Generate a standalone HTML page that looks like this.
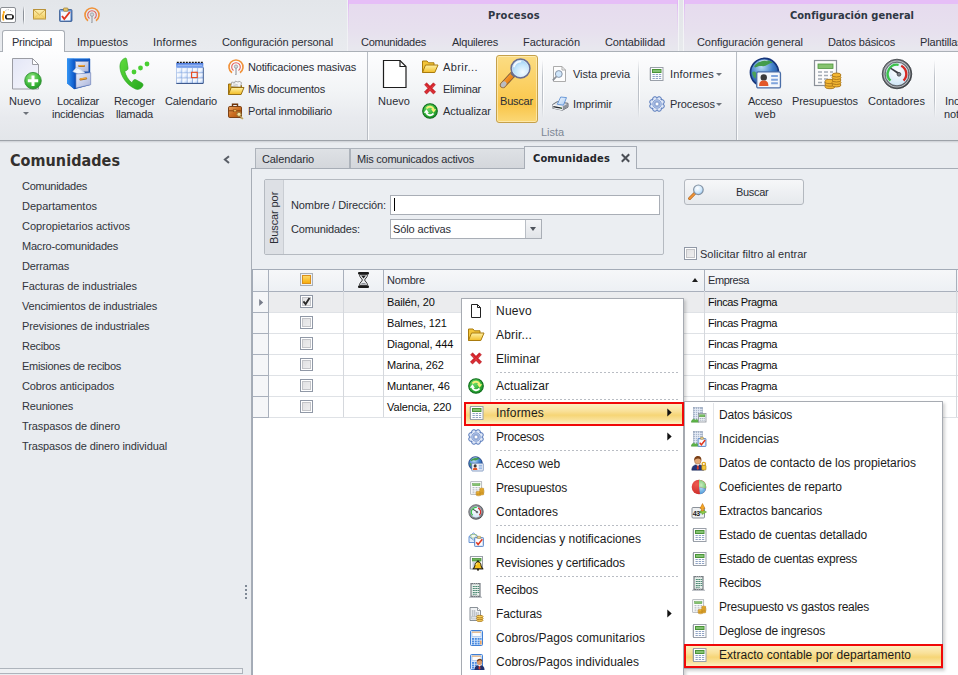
<!DOCTYPE html>
<html lang="es"><head><meta charset="utf-8"><title>Comunidades</title><style>
html,body{margin:0;padding:0;background:#e9ecf0;}
body{width:958px;height:675px;overflow:hidden;position:relative;font-family:"Liberation Sans",sans-serif;color:#2b2e36;}
.b{position:absolute;}
.ic{position:absolute;overflow:visible;}
.t{position:absolute;white-space:nowrap;}
.arr{position:absolute;width:0;height:0;border-left:3px solid transparent;border-right:3px solid transparent;border-top:3px solid #666;}
</style></head><body>
<div class="b" style="left:0px;top:0px;width:958px;height:51px;background:linear-gradient(#e3e6ea,#e9ebef);"></div>
<div class="b" style="left:348px;top:0px;width:330px;height:51px;background:linear-gradient(#e6bef7 0,#e6bef7 4px,#e6dbee 4px,#e7e0ee 30px,#e8e8ee 51px);"></div>
<div class="b" style="left:347px;top:0px;width:1px;height:51px;background:#f1f2f5;"></div>
<div class="b" style="left:348px;top:0px;width:1px;height:51px;background:linear-gradient(#e2b4f6 0,#e2b4f6 4px,#e3c9f0 12px,rgba(230,225,238,0) 34px);"></div>
<div class="b" style="left:677px;top:0px;width:1px;height:51px;background:linear-gradient(#e2b4f6 0,#e2b4f6 4px,#e3c9f0 12px,rgba(230,225,238,0) 34px);"></div>
<div class="b" style="left:684px;top:0px;width:274px;height:51px;background:linear-gradient(#e6bef7 0,#e6bef7 4px,#e6dbee 4px,#e7e0ee 30px,#e8e8ee 51px);"></div>
<div class="b" style="left:684px;top:0px;width:1px;height:51px;background:linear-gradient(#e2b4f6 0,#e2b4f6 4px,#e3c9f0 12px,rgba(230,225,238,0) 34px);"></div>
<div class="b" style="left:678px;top:0px;width:6px;height:51px;background:linear-gradient(#e2e4e8,#e8eaed);border-left:1px solid #f3f4f6;border-right:1px solid #f3f4f6;box-sizing:border-box;"></div>
<div class="b" style="left:0px;top:51px;width:958px;height:89px;background:linear-gradient(#fdfdfe,#f2f4f6 45%,#e8eaee 75%,#e3e6ea);border-top:1px solid #abb0b7;box-sizing:border-box;"></div>
<div class="b" style="left:0px;top:140px;width:958px;height:1px;background:#9da2a9;"></div>
<div class="b" style="left:0px;top:141px;width:958px;height:1px;background:#d3d6db;"></div>
<div class="b" style="left:0px;top:142px;width:958px;height:1px;background:#e1e4e8;"></div>
<div class="b" style="left:2px;top:30px;width:63px;height:22px;background:linear-gradient(#ffffff,#fdfdfe);border:1px solid #a9aeb5;border-bottom:none;border-radius:3px 3px 0 0;box-sizing:border-box;"></div>
<div class="b" style="left:0px;top:7px;width:16px;height:16px;background:#fff;border:1px solid #8b8f95;border-radius:2px;box-sizing:border-box;"><svg width="14" height="14" viewBox="0 0 14 14" style="position:absolute;left:0;top:0"><rect x="4.600" y="6.700" width="7.600" height="4.200" rx="2" fill="none" stroke="#111" stroke-width="1.100"/><path d="M5 7.500v2.600M11.800 7.500v2.600" stroke="#111" stroke-width="1.300"/><path d="M1.700 12.500c-.9-2.500-.9-5.500.3-7.500l1.500.5c-.8 2.300-.6 4.800-.3 7z" fill="#f5a214"/><circle cx="2.900" cy="4.200" r="1.100" fill="#f5a214"/><path d="M4.500 2.600l.9-.6M6.800 1.700h.9M9 2.200l.8.400M10.800 3.400l.5.500" stroke="#8a8d92" stroke-width=".8"/></svg></div>
<div class="b" style="left:23px;top:6px;width:1px;height:19px;background:linear-gradient(rgba(141,146,153,0),#8d9299 30%,#8d9299 70%,rgba(141,146,153,0));"></div>
<div class="b" style="left:24px;top:6px;width:1px;height:19px;background:linear-gradient(rgba(255,255,255,0),#fafbfc 30%,#fafbfc 70%,rgba(255,255,255,0));"></div>
<svg class="ic" style="left:32px;top:8px" width="15" height="13" viewBox="0 0 15 13" ><defs><linearGradient id="env" x1="0" y1="0" x2="0" y2="1"><stop offset="0" stop-color="#fdf0b0"/><stop offset="1" stop-color="#f3cf62"/></linearGradient></defs><rect x="1.500" y="1.500" width="12" height="9.500" fill="url(#env)" stroke="#b8923a"/><path d="M1.500 1.500l6 5.500 6-5.500" fill="none" stroke="#c9a244" stroke-width=".9"/><path d="M1.500 11l4.500-4.500M13.500 11l-4.500-4.500" stroke="#e3c15c" stroke-width=".7"/></svg>
<svg class="ic" style="left:58px;top:7px" width="16" height="16" viewBox="0 0 16 16" ><defs><linearGradient id="clp" x1="0" y1="0" x2="1" y2="1"><stop offset="0" stop-color="#8fb3e6"/><stop offset="1" stop-color="#3d6db8"/></linearGradient></defs><rect x="1.500" y="2.500" width="12.500" height="12" rx="1" fill="url(#clp)" stroke="#34588f" stroke-width=".8"/><rect x="3" y="4.500" width="9.500" height="9" fill="#f7f9fc"/><rect x="5.500" y="1" width="4.500" height="3.200" rx=".8" fill="#e9c66a" stroke="#9a7a2a" stroke-width=".7"/><path d="M4 9l2.300 3 5.500-7" fill="none" stroke="#e0371f" stroke-width="1.900"/></svg>
<svg class="ic" style="left:84px;top:7px" width="16" height="16" viewBox="0 0 16 16" ><path d="M3.990 13.730A7 7 0 1 1 12.010 13.730" fill="none" stroke="#f0923a" stroke-width="1.600"/><path d="M5.530 11.520A4.300 4.300 0 1 1 10.470 11.520" fill="none" stroke="#e2605a" stroke-width="1.100"/><rect x="7.400" y="8.500" width="1.300" height="7.300" fill="#c3c6cb" stroke="#9da1a8" stroke-width=".4"/><circle cx="8" cy="7.600" r="1.700" fill="#d5d7db" stroke="#8b9098" stroke-width=".7"/></svg>
<span class="t" id="t0" style="left:12px;top:35px;font-size:11px;line-height:14px;letter-spacing:-0.243px;">Principal</span>
<span class="t" id="t1" style="left:77px;top:35px;font-size:11px;line-height:14px;letter-spacing:0.028px;">Impuestos</span>
<span class="t" id="t2" style="left:153px;top:35px;font-size:11px;line-height:14px;letter-spacing:0.151px;">Informes</span>
<span class="t" id="t3" style="left:222px;top:35px;font-size:11px;line-height:14px;letter-spacing:-0.097px;">Configuración personal</span>
<span class="t" id="t4" style="left:361px;top:35px;font-size:11px;line-height:14px;letter-spacing:-0.262px;">Comunidades</span>
<span class="t" id="t5" style="left:452px;top:35px;font-size:11px;line-height:14px;letter-spacing:-0.230px;">Alquileres</span>
<span class="t" id="t6" style="left:523px;top:35px;font-size:11px;line-height:14px;letter-spacing:-0.043px;">Facturación</span>
<span class="t" id="t7" style="left:605px;top:35px;font-size:11px;line-height:14px;letter-spacing:-0.097px;">Contabilidad</span>
<span class="t" id="t8" style="left:697px;top:35px;font-size:11px;line-height:14px;letter-spacing:-0.078px;">Configuración general</span>
<span class="t" id="t9" style="left:828px;top:35px;font-size:11px;line-height:14px;letter-spacing:-0.161px;">Datos básicos</span>
<span class="t" id="t10" style="left:920px;top:35px;font-size:11px;line-height:14px;letter-spacing:-0.130px;">Plantillas</span>
<span class="t" id="t11" style="left:488px;top:9px;font-size:11px;line-height:14px;letter-spacing:0.238px;font-weight:bold;font-family:'DejaVu Sans Condensed','Liberation Sans',sans-serif;color:#2f3744;">Procesos</span>
<span class="t" id="t12" style="left:790px;top:9px;font-size:11px;line-height:14px;letter-spacing:0.022px;font-weight:bold;font-family:'DejaVu Sans Condensed','Liberation Sans',sans-serif;color:#2f3744;">Configuración general</span>
<svg class="ic" style="left:11px;top:57px" width="30" height="34" viewBox="0 0 30 34" ><defs><linearGradient id="pg1" x1="0" y1="0" x2="1" y2="1"><stop offset="0" stop-color="#e3e6f6"/><stop offset="1" stop-color="#f7f7fc"/></linearGradient><radialGradient id="gp1" cx=".4" cy=".3" r=".8"><stop offset="0" stop-color="#8fe37f"/><stop offset=".6" stop-color="#3cb83a"/><stop offset="1" stop-color="#1e8a26"/></radialGradient></defs><path d="M1.500 1.500h20l6 6v24.500h-26z" fill="url(#pg1)" stroke="#9b9ca3" stroke-width="1"/><path d="M21.500 1.500v6h6z" fill="#fff" stroke="#9b9ca3" stroke-width="1" stroke-linejoin="round"/><circle cx="22" cy="23.700" r="8.300" fill="url(#gp1)" stroke="#2a8a2c" stroke-width=".8"/><path d="M22 18.500v10.400M16.800 23.700h10.400" stroke="#fff" stroke-width="3"/></svg>
<span class="t" id="t13" style="left:9px;top:94px;font-size:11px;line-height:14px;letter-spacing:0.039px;">Nuevo</span>
<div class="arr" style="left:23px;top:112px;border-top-color:#6d727a"></div>
<svg class="ic" style="left:66px;top:57px" width="26" height="33" viewBox="0 0 26 33" ><defs><linearGradient id="cab" x1="0" y1="0" x2="1" y2="0"><stop offset="0" stop-color="#3496f5"/><stop offset="1" stop-color="#0e5acb"/></linearGradient><linearGradient id="cabf" x1="0" y1="0" x2="1" y2="1"><stop offset="0" stop-color="#1467d8"/><stop offset="1" stop-color="#0a3f9c"/></linearGradient><linearGradient id="drw" x1="0" y1="0" x2="1" y2="1"><stop offset="0" stop-color="#eceffa"/><stop offset="1" stop-color="#a9b4da"/></linearGradient></defs><path d="M1 2.500q0-1.200 1.200-1.200h20.800q1.200 0 1.200 1.200v25.500l-15.700 4.200-7.500-6z" fill="url(#cabf)"/><path d="M1 2.500q0-1.200 1.200-1.200h6v30.900l-7.200-6z" fill="url(#cab)"/><path d="M2.200 1.600h20.600" stroke="#7fbcf8" stroke-width=".9" opacity=".8"/><rect x="9.500" y="4.500" width="13" height="10" fill="url(#drw)" stroke="#6f82b8" stroke-width=".6"/><path d="M6.800 14.500l3.700-4 4 1.500 4.500 3.800-5.500 2z" fill="#f2f6fc" stroke="#a9bfe2" stroke-width=".6"/><path d="M9.500 13l2.500-2 5 4" fill="none" stroke="#c4d6f0" stroke-width=".7"/><path d="M10 17l14.700-1.300v12l-14.700 3.300z" fill="url(#drw)" stroke="#6f82b8" stroke-width=".6"/><path d="M13.300 9h4.600" stroke="#a86a18" stroke-width="2.200" stroke-linecap="round"/><path d="M13.300 8.700h4.600" stroke="#f0a63a" stroke-width="1.300" stroke-linecap="round"/><path d="M14.500 22.300l5.600-.8" stroke="#a86a18" stroke-width="2.200" stroke-linecap="round"/><path d="M14.500 22l5.600-.8" stroke="#f0a63a" stroke-width="1.300" stroke-linecap="round"/></svg>
<span class="t" id="t14" style="left:57px;top:94px;font-size:11px;line-height:14px;letter-spacing:-0.226px;">Localizar</span>
<span class="t" id="t15" style="left:52px;top:107px;font-size:11px;line-height:14px;letter-spacing:-0.221px;">incidencias</span>
<svg class="ic" style="left:118px;top:56px" width="34" height="35" viewBox="0 0 34 35" ><defs><linearGradient id="ph" x1="0" y1="0" x2="1" y2="1"><stop offset="0" stop-color="#5fdc3c"/><stop offset="1" stop-color="#27a81e"/></linearGradient></defs><path d="M7.500 2c-3.500 1-6 4.500-5.500 10 .7 8 6.500 17 15.500 21 3 1.200 6.500-.5 7.500-3.500.3-1-.3-2-1.500-2.700l-5.500-3c-1.300-.6-2.600 0-3.200 1.300l-.8 1.700c-3.500-2.500-6.200-7-7.300-11.500l1.800-.8c1.200-.6 1.800-1.700 1.500-3l-1.200-7.500c-.2-1.300-.7-2.200-1.300-2z" fill="url(#ph)" stroke="#2aa31f" stroke-width=".6"/><circle cx="16" cy="16" r="2.400" fill="#49cf32"/><circle cx="22.500" cy="12" r="2.400" fill="#49cf32"/><circle cx="29" cy="8" r="2.400" fill="#49cf32"/></svg>
<span class="t" id="t16" style="left:114px;top:94px;font-size:11px;line-height:14px;letter-spacing:-0.083px;">Recoger</span>
<span class="t" id="t17" style="left:116px;top:107px;font-size:11px;line-height:14px;letter-spacing:-0.219px;">llamada</span>
<svg class="ic" style="left:176px;top:61px" width="28" height="23" viewBox="0 0 28 23" ><defs><linearGradient id="calc" x1="0" y1="0" x2="1" y2="1"><stop offset="0" stop-color="#ffffff"/><stop offset=".5" stop-color="#f1f6fe"/><stop offset="1" stop-color="#b4cff6"/></linearGradient><linearGradient id="calh" x1="0" y1="0" x2="0" y2="1"><stop offset="0" stop-color="#4877dc"/><stop offset="1" stop-color="#86abf0"/></linearGradient><linearGradient id="calb" x1="0" y1="0" x2="1" y2="1"><stop offset="0" stop-color="#a3bfec"/><stop offset="1" stop-color="#5f86c8"/></linearGradient></defs><rect x=".3" y="2" width="26.900" height="20.400" fill="url(#calb)"/><path d="M.3 22.400h26.900v-16" fill="none" stroke="#2f4d85" stroke-width="1"/><rect x=".3" y="2" width="26.900" height="4.600" fill="url(#calh)"/><path d="M1.500 4.300h24.500" stroke="#a9c4f5" stroke-width="1.400" opacity=".7"/><path d="M.8 1.400h26.500" stroke="#141414" stroke-width="1.200" stroke-dasharray="2 1"/><rect x="0.90" y="7.10" width="4.700" height="4.500" fill="url(#calc)"/><rect x="6.20" y="7.10" width="4.700" height="4.500" fill="url(#calc)"/><rect x="11.50" y="7.10" width="4.700" height="4.500" fill="url(#calc)"/><rect x="16.80" y="7.10" width="4.700" height="4.500" fill="url(#calc)"/><rect x="22.10" y="7.10" width="4.700" height="4.500" fill="url(#calc)"/><rect x="0.90" y="12.20" width="4.700" height="4.500" fill="url(#calc)"/><rect x="6.20" y="12.20" width="4.700" height="4.500" fill="url(#calc)"/><rect x="11.50" y="12.20" width="4.700" height="4.500" fill="url(#calc)"/><rect x="16.80" y="12.20" width="4.700" height="4.500" fill="url(#calc)"/><rect x="22.10" y="12.20" width="4.700" height="4.500" fill="url(#calc)"/><rect x="0.90" y="17.30" width="4.700" height="4.500" fill="url(#calc)"/><rect x="6.20" y="17.30" width="4.700" height="4.500" fill="url(#calc)"/><rect x="11.50" y="17.30" width="4.700" height="4.500" fill="url(#calc)"/><rect x="16.80" y="17.30" width="4.700" height="4.500" fill="url(#calc)"/><rect x="22.10" y="17.30" width="4.700" height="4.500" fill="url(#calc)"/><rect x="15.600" y="11.300" width="5.600" height="5.300" fill="#e6effd" stroke="#e8451a" stroke-width="1.100"/></svg>
<span class="t" id="t18" style="left:165px;top:94px;font-size:11px;line-height:14px;letter-spacing:-0.121px;">Calendario</span>
<svg class="ic" style="left:228px;top:59px" width="16" height="16" viewBox="0 0 16 16" ><path d="M3.990 13.730A7 7 0 1 1 12.010 13.730" fill="none" stroke="#f0923a" stroke-width="1.600"/><path d="M5.530 11.520A4.300 4.300 0 1 1 10.470 11.520" fill="none" stroke="#e2605a" stroke-width="1.100"/><rect x="7.400" y="8.500" width="1.300" height="7.300" fill="#c3c6cb" stroke="#9da1a8" stroke-width=".4"/><circle cx="8" cy="7.600" r="1.700" fill="#d5d7db" stroke="#8b9098" stroke-width=".7"/></svg>
<span class="t" id="t19" style="left:248px;top:60px;font-size:11px;line-height:14px;letter-spacing:-0.177px;">Notificaciones masivas</span>
<svg class="ic" style="left:227px;top:80px" width="18" height="16" viewBox="0 0 18 16" ><defs><linearGradient id="mdf" x1="0" y1="0" x2="0" y2="1"><stop offset="0" stop-color="#fff2a6"/><stop offset="1" stop-color="#f2bb22"/></linearGradient></defs><path d="M1.500 14.500v-10.500h4l1.500 1.500h7.500v2" fill="#e2a818" stroke="#8f6408" stroke-width=".9"/><path d="M3.800 6.500l1-4.500 3 .6.400-1.500 3.200 1 .5-1 2.600 1.500-1 4.500z" fill="#f4f4f4" stroke="#7d7d7d" stroke-width=".6"/><path d="M6 3.500l5 1.500M5.800 5l5 1.300" stroke="#a9a9a9" stroke-width=".5"/><path d="M1.500 14.500l2.700-7h12.800l-2.900 7z" fill="url(#mdf)" stroke="#8f6408" stroke-width=".9" stroke-linejoin="round"/></svg>
<span class="t" id="t20" style="left:248px;top:82px;font-size:11px;line-height:14px;letter-spacing:-0.222px;">Mis documentos</span>
<svg class="ic" style="left:227px;top:102px" width="18" height="18" viewBox="0 0 18 18" ><defs><linearGradient id="brf" x1="0" y1="0" x2="1" y2="1"><stop offset="0" stop-color="#e9a262"/><stop offset=".5" stop-color="#cc6f22"/><stop offset="1" stop-color="#a9520e"/></linearGradient></defs><path d="M5.500 4.500v-2.300h5v2.300" fill="none" stroke="#6f3409" stroke-width="1.400"/><rect x="1.500" y="4.500" width="13" height="11" rx="1.300" fill="url(#brf)" stroke="#6f3409" stroke-width=".9"/><path d="M1.500 8.800h13" stroke="#7d3f0e" stroke-width=".9"/><rect x="6.500" y="7.800" width="3" height="2" fill="#f0c060" stroke="#7d3f0e" stroke-width=".5"/><circle cx="12" cy="12.300" r="2.100" fill="#f6e3a0" stroke="#9a7a3a" stroke-width="1"/><path d="M13.400 13.800l2.600 3.400m-1.100-1.400l-1.200.9" stroke="#bfa560" stroke-width="1.300" fill="none"/></svg>
<span class="t" id="t21" style="left:248px;top:104px;font-size:11px;line-height:14px;letter-spacing:-0.180px;">Portal inmobiliario</span>
<div class="b" style="left:367px;top:52px;width:1px;height:88px;background:#b9bdc4;"></div>
<div class="b" style="left:368px;top:52px;width:1px;height:88px;background:#fafbfc;"></div>
<svg class="ic" style="left:382px;top:59px" width="26" height="31" viewBox="0 0 26 31" ><path d="M1.500 1.500h16.500l6 6v21h-22.500z" fill="#fff" stroke="#1d1d1d" stroke-width="1.200"/><path d="M18 1.500v6h6" fill="none" stroke="#1d1d1d" stroke-width="1.200"/></svg>
<span class="t" id="t22" style="left:378px;top:94px;font-size:11px;line-height:14px;letter-spacing:0.039px;">Nuevo</span>
<svg class="ic" style="left:421px;top:59px" width="18" height="15" viewBox="0 0 18 15" ><defs><linearGradient id="fg421059" x1="0" y1="0" x2="0" y2="1"><stop offset="0" stop-color="#fff3a8"/><stop offset="1" stop-color="#f2bd28"/></linearGradient></defs><path d="M1.500 13.500v-11.500h4.500l1.500 1.800h5.500v2.200" fill="#f3c53a" stroke="#a97b0e" stroke-width="1" stroke-linejoin="round"/><path d="M1.500 13.500l3-7.500h12.500l-3.200 7.500z" fill="url(#fg421059)" stroke="#a97b0e" stroke-width="1" stroke-linejoin="round"/></svg>
<span class="t" id="t23" style="left:443px;top:60px;font-size:11px;line-height:14px;letter-spacing:0.401px;">Abrir...</span>
<svg class="ic" style="left:422px;top:81px" width="16" height="16" viewBox="0 0 16 16" ><path d="M2.600 3.800L4.600 1.800 8 5.200 11.400 1.800 13.400 3.800 10.100 7.300 13.600 10.900 11.400 13 8 9.500 4.600 13 2.400 10.900 5.900 7.300z" fill="#d6222a" stroke="#b01a20" stroke-width=".6" stroke-linejoin="round"/><path d="M3.600 3.800L12.400 12M12.400 3.800L3.600 12" stroke="#e8585c" stroke-width=".8" stroke-dasharray="1 1"/></svg>
<span class="t" id="t24" style="left:443px;top:82px;font-size:11px;line-height:14px;letter-spacing:-0.218px;">Eliminar</span>
<svg class="ic" style="left:422px;top:103px" width="16" height="16" viewBox="0 0 16 16" ><defs><radialGradient id="rg422103" cx=".4" cy=".3" r=".8"><stop offset="0" stop-color="#6fdc6a"/><stop offset=".6" stop-color="#2fae36"/><stop offset="1" stop-color="#148322"/></radialGradient></defs><circle cx="8" cy="8" r="7.300" fill="url(#rg422103)" stroke="#0f6d1c" stroke-width="1.100"/><path d="M11.500 10.500a4.200 4.200 0 0 1-7.300-1" fill="none" stroke="#fff" stroke-width="2"/><path d="M1.800 9.800l2.700-3.600 2.400 3.700z" fill="#fff"/><path d="M4.500 5.500a4.200 4.200 0 0 1 7.300 1" fill="none" stroke="#f7ef7a" stroke-width="2"/><path d="M14.200 6.200l-2.700 3.600-2.400-3.700z" fill="#f7ef7a"/></svg>
<span class="t" id="t25" style="left:443px;top:104px;font-size:11px;line-height:14px;letter-spacing:-0.030px;">Actualizar</span>
<div class="b" style="left:496px;top:55px;width:42px;height:68px;background:linear-gradient(#fbdc83,#fbd165 40%,#f9c64b 75%,#fbd877);border:1px solid #c5a04a;border-radius:3px;box-sizing:border-box;box-shadow:inset 0 0 0 1px rgba(255,240,190,.7);"></div>
<svg class="ic" style="left:499px;top:57px" width="34" height="34" viewBox="0 0 34 34" ><defs><radialGradient id="mg499057" cx=".62" cy=".7" r=".75"><stop offset="0" stop-color="#f4fbff"/><stop offset=".55" stop-color="#c4e6fb"/><stop offset="1" stop-color="#8cc4ee"/></radialGradient><linearGradient id="mh499057" x1="0" y1="0" x2="1" y2="1"><stop offset="0" stop-color="#fbb45c"/><stop offset=".5" stop-color="#f08a1e"/><stop offset="1" stop-color="#c96a10"/></linearGradient></defs><path d="M13.600 17.600L4 28" stroke="#7a5a3a" stroke-width="6.200" stroke-linecap="round"/><path d="M13.600 17.600L4 28" stroke="url(#mh499057)" stroke-width="4.600" stroke-linecap="round"/><path d="M5.300 26.600L4 28" stroke="#b9bcc4" stroke-width="4.600" stroke-linecap="round"/><path d="M12.300 16l3.800 3.500" stroke="#6d6f7a" stroke-width="2.600"/><circle cx="21.500" cy="11.500" r="9.300" fill="url(#mg499057)" stroke="#6a6e92" stroke-width="1.700"/><path d="M15 9.500a7 7 0 0 1 6.500-5" fill="none" stroke="#ffffff" stroke-width="1.800" opacity=".85" stroke-linecap="round"/><circle cx="21.500" cy="11.500" r="8.200" fill="none" stroke="#e8f5ff" stroke-width=".7" opacity=".8"/></svg>
<span class="t" id="t26" style="left:500px;top:94px;font-size:11px;line-height:14px;letter-spacing:-0.208px;">Buscar</span>
<div class="b" style="left:542px;top:60px;width:1px;height:58px;background:linear-gradient(rgba(190,195,202,0),#bcc1c8 30%,#bcc1c8 70%,rgba(190,195,202,0));"></div>
<div class="b" style="left:543px;top:60px;width:1px;height:58px;background:linear-gradient(rgba(255,255,255,0),#fff 30%,#fff 70%,rgba(255,255,255,0));"></div>
<svg class="ic" style="left:551px;top:65px" width="16" height="18" viewBox="0 0 16 18" ><path d="M2.500 1.500h8.500l3.500 3.500v11.500h-12z" fill="#fdfdfd" stroke="#a3a3a3" stroke-width=".9"/><path d="M11 1.500v3.500h3.500" fill="none" stroke="#a3a3a3" stroke-width=".9"/><circle cx="7.800" cy="9" r="3.400" fill="#cfe6fb" stroke="#8794a6" stroke-width="1"/><path d="M5.300 11.700l-3.500 3.600" stroke="#8a8f97" stroke-width="1.700"/></svg>
<span class="t" id="t27" style="left:573px;top:67px;font-size:11px;line-height:14px;letter-spacing:-0.024px;">Vista previa</span>
<svg class="ic" style="left:551px;top:96px" width="18" height="16" viewBox="0 0 18 16" ><defs><linearGradient id="prp" x1="0" y1="0" x2="1" y2="1"><stop offset="0" stop-color="#f4f9ff"/><stop offset="1" stop-color="#a9cbf2"/></linearGradient></defs><path d="M1.500 8.600l4.700-2.900 10.800 1.600v3.800l-5.500 3.100-10-2.100z" fill="#e4e6ea" stroke="#565a62" stroke-width=".9" stroke-linejoin="round"/><path d="M11.500 10.400l5.500-2.900v3.600l-5.500 3.100z" fill="#8f949c"/><path d="M1.500 8.800l10 1.700v3.700l-10-2.100z" fill="#f5f6f8"/><path d="M2.300 10.100l8.500 1.500v1.500l-8.500-1.700z" fill="#25282d"/><path d="M2.800 11.900l7.500 1.500" stroke="#f2f3f5" stroke-width=".6"/><circle cx="9.600" cy="12" r=".55" fill="#5fd04a"/><path d="M6.300 8.300l3.400-7.300 5.800.6-3 7.600z" fill="url(#prp)" stroke="#4f86d0" stroke-width=".8" stroke-linejoin="round"/></svg>
<span class="t" id="t28" style="left:573px;top:97px;font-size:11px;line-height:14px;letter-spacing:-0.091px;">Imprimir</span>
<div class="b" style="left:638px;top:60px;width:1px;height:58px;background:linear-gradient(rgba(190,195,202,0),#bcc1c8 30%,#bcc1c8 70%,rgba(190,195,202,0));"></div>
<div class="b" style="left:639px;top:60px;width:1px;height:58px;background:linear-gradient(rgba(255,255,255,0),#fff 30%,#fff 70%,rgba(255,255,255,0));"></div>
<svg class="ic" style="left:648px;top:66px" width="16" height="16" viewBox="0 0 16 16" ><rect x="2.500" y="1.500" width="12.500" height="13" fill="#fdfdfe" stroke="#9aa0a9"/><path d="M2.500 3h-1M2.500 5h-1M2.500 7h-1M2.500 9h-1M2.500 11h-1M2.500 13h-1" stroke="#8a9098" stroke-width="1"/><rect x="4.500" y="3.500" width="8.500" height="3" fill="#6db35a" stroke="#4a9438" stroke-width="1"/><path d="M5 5h7.500" stroke="#9bd08a" stroke-width="1"/><g fill="#8fa3c4"><rect x="4.500" y="8" width="2.300" height="1"/><rect x="7.700" y="8" width="2.300" height="1"/><rect x="10.900" y="8" width="2.300" height="1"/><rect x="4.500" y="10" width="2.300" height="1"/><rect x="7.700" y="10" width="2.300" height="1"/><rect x="10.900" y="10" width="2.300" height="1"/><rect x="4.500" y="12" width="2.300" height="1"/><rect x="7.700" y="12" width="2.300" height="1"/><rect x="10.900" y="12" width="2.300" height="1"/></g></svg>
<span class="t" id="t29" style="left:670px;top:67px;font-size:11px;line-height:14px;letter-spacing:0.151px;">Informes</span>
<div class="arr" style="left:716px;top:73px;border-top-color:#6d727a"></div>
<svg class="ic" style="left:649px;top:96px" width="16" height="16" viewBox="0 0 16 16" ><g fill="#e1e9f7" stroke="#4f73b8" stroke-width="1"><circle cx="12.99" cy="10.07" r="2.300"/><circle cx="10.07" cy="12.99" r="2.300"/><circle cx="5.93" cy="12.99" r="2.300"/><circle cx="3.01" cy="10.07" r="2.300"/><circle cx="3.01" cy="5.93" r="2.300"/><circle cx="5.93" cy="3.01" r="2.300"/><circle cx="10.07" cy="3.01" r="2.300"/><circle cx="12.99" cy="5.93" r="2.300"/></g><circle cx="8" cy="8" r="5.600" fill="#e1e9f7"/><circle cx="8" cy="8" r="4.200" fill="#c5d3ee" stroke="#6f8fcb" stroke-width=".9"/><rect x="6" y="6" width="4" height="4" rx=".6" fill="#ffffff" stroke="#4f73b8" stroke-width=".9"/></svg>
<span class="t" id="t30" style="left:670px;top:97px;font-size:11px;line-height:14px;letter-spacing:-0.107px;">Procesos</span>
<div class="arr" style="left:716px;top:103px;border-top-color:#6d727a"></div>
<span class="t" id="t31" style="left:541px;top:125px;font-size:11px;line-height:14px;letter-spacing:-0.049px;color:#7d8796;">Lista</span>
<div class="b" style="left:736px;top:52px;width:1px;height:88px;background:#b9bdc4;"></div>
<div class="b" style="left:737px;top:52px;width:1px;height:88px;background:#fafbfc;"></div>
<svg class="ic" style="left:749px;top:57px" width="33" height="33" viewBox="0 0 32 32" ><defs><radialGradient id="wg749057" cx=".4" cy=".3" r=".8"><stop offset="0" stop-color="#b9dcf5"/><stop offset=".5" stop-color="#3f7fca"/><stop offset="1" stop-color="#143c86"/></radialGradient></defs><circle cx="15" cy="15" r="13.600" fill="url(#wg749057)" stroke="#16357a" stroke-width="1.600"/><path d="M5 9c2.500-4 8-6.500 14-5.500 2 .5 3.500 1.500 4 2.500-3-.5-4 1.500-7 2.500s-4.500-.5-7 .5-3 2-4 0z" fill="#3f9a44" opacity=".95"/><path d="M3 15c1.500-1.500 3-1 4 .5s0 4-1 5.500c-1.500-1.500-2.800-3.500-3-6z" fill="#4aa34c" opacity=".9"/><path d="M10 4.500c3-1.500 6-1.500 8-.8" fill="none" stroke="#e8f4ff" stroke-width="1" opacity=".6"/><rect x="7.500" y="14.500" width="23" height="15.500" rx="1.500" fill="#f4f7fb" stroke="#4a6ea8" stroke-width="1.300"/><circle cx="14.300" cy="19.800" r="3.100" fill="#3a3a3a"/><path d="M9.800 28c0-4 2-5.200 4.500-5.200s4.500 1.200 4.500 5.200z" fill="#e2582a"/><path d="M21.500 18.500h6.500M21.500 22h6.500M21.500 25.500h6.500" stroke="#7fa4dc" stroke-width="2"/></svg>
<span class="t" id="t32" style="left:748px;top:94px;font-size:11px;line-height:14px;letter-spacing:-0.346px;">Acceso</span>
<span class="t" id="t33" style="left:755px;top:107px;font-size:11px;line-height:14px;letter-spacing:0.271px;">web</span>
<svg class="ic" style="left:811px;top:59px" width="32" height="32" viewBox="0 0 32 32" ><rect x="3.500" y="1.500" width="22" height="25" fill="#fcfcfc" stroke="#8a9098" stroke-width="1.2"/><rect x="7" y="5" width="15" height="4.500" fill="#86c36f" stroke="#4f9440" stroke-width=".8"/><g stroke="#a3abb5" stroke-width="1.600"><path d="M7 13h4M13 13h4M19 13h3M7 16.500h4M13 16.500h4M19 16.500h3M7 20h4M13 20h4M7 23.500h4M13 23.500h4"/></g><g fill="#f2b632" stroke="#a8741a" stroke-width=".9"><ellipse cx="19" cy="27.500" rx="5" ry="2.200"/><ellipse cx="19" cy="25" rx="5" ry="2.200"/><ellipse cx="19" cy="22.500" rx="5" ry="2.200"/><ellipse cx="25.500" cy="26" rx="4.500" ry="2"/><ellipse cx="25.500" cy="23.500" rx="4.500" ry="2"/><ellipse cx="25.500" cy="21" rx="4.500" ry="2"/><ellipse cx="25.500" cy="18.500" rx="4.500" ry="2"/><ellipse cx="25.500" cy="16" rx="4.500" ry="2"/></g></svg>
<span class="t" id="t34" style="left:792px;top:94px;font-size:11px;line-height:14px;letter-spacing:-0.106px;">Presupuestos</span>
<svg class="ic" style="left:881px;top:58px" width="32" height="32" viewBox="0 0 32 32" ><defs><linearGradient id="gg881058" x1="0" y1="0" x2="1" y2="1"><stop offset="0" stop-color="#8a8d93"/><stop offset="1" stop-color="#2f3236"/></linearGradient><radialGradient id="gf881058" cx=".5" cy=".4" r=".7"><stop offset="0" stop-color="#ffffff"/><stop offset="1" stop-color="#c6e0f5"/></radialGradient></defs><circle cx="16" cy="16" r="14.800" fill="url(#gg881058)" stroke="#3a3d42" stroke-width=".8"/><circle cx="16" cy="16" r="12.900" fill="none" stroke="#b4b8be" stroke-width="1.100"/><circle cx="16" cy="16" r="11.800" fill="url(#gf881058)" stroke="#55595f" stroke-width=".8"/><path d="M9.42 22.58A9.300 9.300 0 0 1 17.61 6.84" fill="none" stroke="#3cc14a" stroke-width="2.400"/><path d="M20.22 7.71A9.300 9.300 0 0 1 22.58 22.58" fill="none" stroke="#d62a24" stroke-width="2.400"/><path d="M18.300 17.200L9.300 10.800l.8-1.100 9.400 5.600z" fill="#3b3e44"/><circle cx="18" cy="16.300" r="1.900" fill="#7a7e85" stroke="#3b3e44" stroke-width=".7"/></svg>
<span class="t" id="t35" style="left:868px;top:94px;font-size:11px;line-height:14px;letter-spacing:0.012px;">Contadores</span>
<div class="b" style="left:934px;top:60px;width:1px;height:58px;background:linear-gradient(rgba(190,195,202,0),#bcc1c8 30%,#bcc1c8 70%,rgba(190,195,202,0));"></div>
<div class="b" style="left:935px;top:60px;width:1px;height:58px;background:linear-gradient(rgba(255,255,255,0),#fff 30%,#fff 70%,rgba(255,255,255,0));"></div>
<span class="t" id="t36" style="left:945px;top:94px;font-size:11px;line-height:14px;letter-spacing:-0.130px;">Inc</span>
<span class="t" id="t37" style="left:944px;top:107px;font-size:11px;line-height:14px;letter-spacing:-0.130px;">not</span>
<div class="b" style="left:0px;top:143px;width:958px;height:532px;background:#e9ecf0;"></div>
<span class="t" id="t38" style="left:10px;top:151px;font-size:16px;line-height:19px;letter-spacing:0.041px;font-weight:bold;font-family:'DejaVu Sans Condensed','Liberation Sans',sans-serif;color:#33302e;">Comunidades</span>
<svg class="ic" style="left:223px;top:155px" width="8" height="10" viewBox="0 0 8 10"><path d="M6 1.200L1.900 4.600 6 8" fill="none" stroke="#595e67" stroke-width="2"/></svg>
<span class="t" id="t39" style="left:22px;top:179px;font-size:11px;line-height:14px;letter-spacing:-0.262px;color:#31343b;">Comunidades</span>
<span class="t" id="t40" style="left:22px;top:199px;font-size:11px;line-height:14px;letter-spacing:-0.016px;color:#31343b;">Departamentos</span>
<span class="t" id="t41" style="left:22px;top:219px;font-size:11px;line-height:14px;letter-spacing:-0.038px;color:#31343b;">Copropietarios activos</span>
<span class="t" id="t42" style="left:22px;top:239px;font-size:11px;line-height:14px;letter-spacing:-0.215px;color:#31343b;">Macro-comunidades</span>
<span class="t" id="t43" style="left:22px;top:259px;font-size:11px;line-height:14px;letter-spacing:-0.161px;color:#31343b;">Derramas</span>
<span class="t" id="t44" style="left:22px;top:279px;font-size:11px;line-height:14px;letter-spacing:-0.074px;color:#31343b;">Facturas de industriales</span>
<span class="t" id="t45" style="left:22px;top:299px;font-size:11px;line-height:14px;letter-spacing:-0.158px;color:#31343b;">Vencimientos de industriales</span>
<span class="t" id="t46" style="left:22px;top:319px;font-size:11px;line-height:14px;letter-spacing:-0.124px;color:#31343b;">Previsiones de industriales</span>
<span class="t" id="t47" style="left:22px;top:339px;font-size:11px;line-height:14px;letter-spacing:-0.250px;color:#31343b;">Recibos</span>
<span class="t" id="t48" style="left:22px;top:359px;font-size:11px;line-height:14px;letter-spacing:-0.278px;color:#31343b;">Emisiones de recibos</span>
<span class="t" id="t49" style="left:22px;top:379px;font-size:11px;line-height:14px;letter-spacing:-0.120px;color:#31343b;">Cobros anticipados</span>
<span class="t" id="t50" style="left:22px;top:399px;font-size:11px;line-height:14px;letter-spacing:-0.177px;color:#31343b;">Reuniones</span>
<span class="t" id="t51" style="left:22px;top:419px;font-size:11px;line-height:14px;letter-spacing:-0.099px;color:#31343b;">Traspasos de dinero</span>
<span class="t" id="t52" style="left:22px;top:439px;font-size:11px;line-height:14px;letter-spacing:-0.127px;color:#31343b;">Traspasos de dinero individual</span>
<div class="b" style="left:245px;top:585px;width:2px;height:2px;background:#7f8996;"></div>
<div class="b" style="left:245px;top:589px;width:2px;height:2px;background:#7f8996;"></div>
<div class="b" style="left:245px;top:593px;width:2px;height:2px;background:#7f8996;"></div>
<div class="b" style="left:245px;top:597px;width:2px;height:2px;background:#7f8996;"></div>
<div class="b" style="left:0px;top:668px;width:243px;height:6px;background:#eef0f3;border:1px solid #aeb4bc;border-left:none;box-sizing:border-box;"></div>
<div class="b" style="left:255px;top:148px;width:95px;height:21px;background:linear-gradient(#dee1e5,#d4d7dc);border:1px solid #adb3bb;box-sizing:border-box;"></div>
<div class="b" style="left:349px;top:148px;width:176px;height:21px;background:linear-gradient(#dee1e5,#d4d7dc);border:1px solid #adb3bb;border-left-width:2px;box-sizing:border-box;"></div>
<span class="t" id="t53" style="left:262px;top:152px;font-size:11px;line-height:14px;letter-spacing:-0.121px;">Calendario</span>
<span class="t" id="t54" style="left:357px;top:152px;font-size:11px;line-height:14px;letter-spacing:-0.230px;">Mis comunicados activos</span>
<div class="b" style="left:251px;top:168px;width:710px;height:510px;background:#ebeef2;border:1px solid #a7adb6;box-sizing:border-box;"></div>
<div class="b" style="left:524px;top:146px;width:113px;height:23px;background:#ebeef2;border:1px solid #a7adb6;border-bottom:none;box-sizing:border-box;"></div>
<span class="t" id="t55" style="left:533px;top:152px;font-size:11px;line-height:14px;letter-spacing:0.153px;font-weight:bold;font-family:'DejaVu Sans Condensed','Liberation Sans',sans-serif;color:#24262b;">Comunidades</span>
<svg class="ic" style="left:620px;top:153px" width="11" height="10" viewBox="0 0 11 10"><path d="M1.800 1.300l7.400 7.400M9.200 1.300l-7.400 7.400" stroke="#4b4f56" stroke-width="2"/></svg>
<div class="b" style="left:264px;top:179px;width:400px;height:76px;background:#ebeef2;border:1px solid #b5bac1;border-radius:2px;box-sizing:border-box;"></div>
<div class="b" style="left:265px;top:180px;width:18px;height:74px;background:#dde0e5;border-right:1px solid #c9cdd3;"></div>
<span class="t" style="left:267px;top:244px;font-size:11px;line-height:14px;letter-spacing:-.1px;transform-origin:0 0;transform:rotate(-90deg);">Buscar por</span>
<span class="t" id="t56" style="left:291px;top:198px;font-size:11px;line-height:14px;letter-spacing:-0.116px;">Nombre / Dirección:</span>
<span class="t" id="t57" style="left:291px;top:222px;font-size:11px;line-height:14px;letter-spacing:-0.162px;">Comunidades:</span>
<div class="b" style="left:390px;top:195px;width:270px;height:20px;background:#fff;border:1px solid #a9aeb6;box-sizing:border-box;"></div>
<div class="b" style="left:394px;top:198px;width:1px;height:13px;background:#000;"></div>
<div class="b" style="left:390px;top:219px;width:152px;height:20px;background:#fff;border:1px solid #a9aeb6;box-sizing:border-box;"></div>
<div class="b" style="left:525px;top:220px;width:16px;height:18px;background:linear-gradient(#f4f5f7,#e1e4e8);border-left:1px solid #b9bec5;box-sizing:border-box;"></div>
<div class="arr" style="left:530px;top:227px;border-left-width:3.500px;border-right-width:3.500px;border-top:4px solid #4f545c"></div>
<span class="t" id="t58" style="left:393px;top:222px;font-size:11px;line-height:14px;letter-spacing:-0.110px;">Sólo activas</span>
<div class="b" style="left:684px;top:179px;width:120px;height:26px;background:linear-gradient(#f6f7f9,#e6e9ed);border:1px solid #b3b8bf;border-radius:3px;box-sizing:border-box;"></div>
<svg class="ic" style="left:688px;top:184px" width="16" height="16" viewBox="0 0 16 16" ><defs><radialGradient id="ms688184" cx=".4" cy=".35" r=".7"><stop offset="0" stop-color="#ffffff"/><stop offset=".6" stop-color="#d2e9fc"/><stop offset="1" stop-color="#8fc4f2"/></radialGradient></defs><path d="M6.800 9.300L1.600 14.500" stroke="#a35a12" stroke-width="3" stroke-linecap="round"/><path d="M6.800 9.300L1.600 14.500" stroke="#f0943a" stroke-width="1.800" stroke-linecap="round"/><circle cx="10.400" cy="5.800" r="4.800" fill="url(#ms688184)" stroke="#8593a3" stroke-width="1.200"/></svg>
<span class="t" id="t59" style="left:736px;top:185px;font-size:11px;line-height:14px;letter-spacing:-0.291px;">Buscar</span>
<div class="b" style="left:684px;top:247px;width:13px;height:13px;background:linear-gradient(135deg,#dedee0,#f1f1f2);border:1px solid #9098a6;box-shadow:inset 0 0 0 1px #fff,inset 0 0 0 2px #c3c4c8;box-sizing:border-box;"></div>
<span class="t" id="t60" style="left:700px;top:247px;font-size:11px;line-height:14px;letter-spacing:0.024px;">Solicitar filtro al entrar</span>
<div class="b" style="left:252px;top:269px;width:710px;height:149px;background:#fff;border:1px solid #a3abb7;border-bottom:1px solid #dfe2e6;box-sizing:border-box;"></div>
<div class="b" style="left:253px;top:270px;width:708px;height:21px;background:linear-gradient(#f6f7f9,#edf0f4);"></div>
<div class="b" style="left:253px;top:291px;width:708px;height:1px;background:#a9b0bc;"></div>
<div class="b" style="left:253px;top:292px;width:15px;height:125px;background:#f5f6f8;"></div>
<div class="b" style="left:269px;top:292px;width:692px;height:20px;background:#ebecee;"></div>
<div class="b" style="left:253px;top:312px;width:708px;height:1px;background:#dfe2e6;"></div>
<div class="b" style="left:253px;top:333px;width:708px;height:1px;background:#dfe2e6;"></div>
<div class="b" style="left:253px;top:354px;width:708px;height:1px;background:#dfe2e6;"></div>
<div class="b" style="left:253px;top:375px;width:708px;height:1px;background:#dfe2e6;"></div>
<div class="b" style="left:253px;top:396px;width:708px;height:1px;background:#dfe2e6;"></div>
<div class="b" style="left:268px;top:270px;width:1px;height:147px;background:#d5d8dd;"></div>
<div class="b" style="left:268px;top:270px;width:1px;height:21px;background:#a9b0bc;"></div>
<div class="b" style="left:343px;top:270px;width:1px;height:147px;background:#d5d8dd;"></div>
<div class="b" style="left:343px;top:270px;width:1px;height:21px;background:#a9b0bc;"></div>
<div class="b" style="left:383px;top:270px;width:1px;height:147px;background:#d5d8dd;"></div>
<div class="b" style="left:383px;top:270px;width:1px;height:21px;background:#a9b0bc;"></div>
<div class="b" style="left:704px;top:270px;width:1px;height:147px;background:#d5d8dd;"></div>
<div class="b" style="left:704px;top:270px;width:1px;height:21px;background:#a9b0bc;"></div>
<div class="b" style="left:956px;top:270px;width:1px;height:147px;background:#d5d8dd;"></div>
<div class="b" style="left:956px;top:270px;width:1px;height:21px;background:#a9b0bc;"></div>
<div class="b" style="left:268px;top:270px;width:1px;height:147px;background:#a9b0bc;"></div>
<div class="b" style="left:253px;top:312px;width:16px;height:1px;background:#a9b0bc;"></div>
<div class="b" style="left:253px;top:333px;width:16px;height:1px;background:#a9b0bc;"></div>
<div class="b" style="left:253px;top:354px;width:16px;height:1px;background:#a9b0bc;"></div>
<div class="b" style="left:253px;top:375px;width:16px;height:1px;background:#a9b0bc;"></div>
<div class="b" style="left:253px;top:396px;width:16px;height:1px;background:#a9b0bc;"></div>
<div class="b" style="left:253px;top:417px;width:16px;height:1px;background:#a9b0bc;"></div>
<div class="b" style="left:252px;top:418px;width:710px;height:260px;background:#fff;"></div>
<div class="b" style="left:252px;top:269px;width:1px;height:410px;background:#a3abb7;"></div>
<div class="b" style="left:300px;top:273px;width:13px;height:13px;background:#eef0f3;border:1px solid #a9afb7;box-sizing:border-box;"><div style="position:absolute;left:1px;top:1px;width:9px;height:9px;background:linear-gradient(#fdd868,#f7ae0c);border:1px solid #d9901c;box-sizing:border-box;"></div></div>
<svg class="ic" style="left:357px;top:271px" width="13" height="18" viewBox="0 0 13 18" ><rect x="1" y="1" width="11" height="2.600" rx="1" fill="#1b1b1b"/><rect x="1" y="14.400" width="11" height="2.600" rx="1" fill="#1b1b1b"/><path d="M2.500 3.500c0 3.500 2.800 4 2.800 5.500s-2.800 2-2.800 5.500h8c0-3.500-2.800-4-2.800-5.500s2.800-2 2.800-5.500z" fill="#e6e8eb" stroke="#3a3a3a" stroke-width="1"/><path d="M4 4.500h5l-2.500 3z" fill="#222"/><path d="M3.800 13.600c.4-1.200 1.400-1.500 2.700-1.500s2.300.3 2.700 1.500z" fill="#8b8f96"/></svg>
<span class="t" id="t61" style="left:387px;top:273px;font-size:11px;line-height:14px;letter-spacing:-0.187px;">Nombre</span>
<span class="t" id="t62" style="left:708px;top:273px;font-size:11px;line-height:14px;letter-spacing:-0.431px;">Empresa</span>
<div class="arr" style="left:692px;top:278px;border-left-width:3.500px;border-right-width:3.500px;border-top:none;border-bottom:4px solid #1e1e1e;"></div>
<svg class="ic" style="left:259px;top:298px" width="5" height="9" viewBox="0 0 5 9"><path d="M.2 1L4.200 4.500 .2 8z" fill="#777c89"/></svg>
<span class="t" id="t63" style="left:387px;top:295px;font-size:11px;line-height:14px;letter-spacing:-0.130px;color:#0c0c0c;">Bailén, 20</span>
<span class="t" id="t64" style="left:708px;top:295px;font-size:11px;line-height:14px;letter-spacing:-0.383px;color:#0c0c0c;">Fincas Pragma</span>
<div class="b" style="left:300px;top:295px;width:13px;height:13px;background:linear-gradient(135deg,#dedee0,#f1f1f2);border:1px solid #9098a6;box-shadow:inset 0 0 0 1px #fff,inset 0 0 0 2px #c3c4c8;box-sizing:border-box;"><svg width="11" height="11" viewBox="0 0 11 11" style="position:absolute;left:0;top:0"><path d="M2.400 5.400l2.200 2.700 3.900-6.200" fill="none" stroke="#2a2a2a" stroke-width="1.800"/></svg></div>
<span class="t" id="t65" style="left:387px;top:316px;font-size:11px;line-height:14px;letter-spacing:-0.130px;color:#0c0c0c;">Balmes, 121</span>
<span class="t" id="t66" style="left:708px;top:316px;font-size:11px;line-height:14px;letter-spacing:-0.383px;color:#0c0c0c;">Fincas Pragma</span>
<div class="b" style="left:300px;top:316px;width:13px;height:13px;background:linear-gradient(135deg,#dedee0,#f1f1f2);border:1px solid #9098a6;box-shadow:inset 0 0 0 1px #fff,inset 0 0 0 2px #c3c4c8;box-sizing:border-box;"></div>
<span class="t" id="t67" style="left:387px;top:337px;font-size:11px;line-height:14px;letter-spacing:-0.130px;color:#0c0c0c;">Diagonal, 444</span>
<span class="t" id="t68" style="left:708px;top:337px;font-size:11px;line-height:14px;letter-spacing:-0.383px;color:#0c0c0c;">Fincas Pragma</span>
<div class="b" style="left:300px;top:337px;width:13px;height:13px;background:linear-gradient(135deg,#dedee0,#f1f1f2);border:1px solid #9098a6;box-shadow:inset 0 0 0 1px #fff,inset 0 0 0 2px #c3c4c8;box-sizing:border-box;"></div>
<span class="t" id="t69" style="left:387px;top:358px;font-size:11px;line-height:14px;letter-spacing:-0.130px;color:#0c0c0c;">Marina, 262</span>
<span class="t" id="t70" style="left:708px;top:358px;font-size:11px;line-height:14px;letter-spacing:-0.383px;color:#0c0c0c;">Fincas Pragma</span>
<div class="b" style="left:300px;top:358px;width:13px;height:13px;background:linear-gradient(135deg,#dedee0,#f1f1f2);border:1px solid #9098a6;box-shadow:inset 0 0 0 1px #fff,inset 0 0 0 2px #c3c4c8;box-sizing:border-box;"></div>
<span class="t" id="t71" style="left:387px;top:379px;font-size:11px;line-height:14px;letter-spacing:-0.130px;color:#0c0c0c;">Muntaner, 46</span>
<span class="t" id="t72" style="left:708px;top:379px;font-size:11px;line-height:14px;letter-spacing:-0.383px;color:#0c0c0c;">Fincas Pragma</span>
<div class="b" style="left:300px;top:379px;width:13px;height:13px;background:linear-gradient(135deg,#dedee0,#f1f1f2);border:1px solid #9098a6;box-shadow:inset 0 0 0 1px #fff,inset 0 0 0 2px #c3c4c8;box-sizing:border-box;"></div>
<span class="t" id="t73" style="left:387px;top:400px;font-size:11px;line-height:14px;letter-spacing:-0.130px;color:#0c0c0c;">Valencia, 220</span>
<span class="t" id="t74" style="left:708px;top:400px;font-size:11px;line-height:14px;letter-spacing:-0.383px;color:#0c0c0c;">Fincas Pragma</span>
<div class="b" style="left:300px;top:400px;width:13px;height:13px;background:linear-gradient(135deg,#dedee0,#f1f1f2);border:1px solid #9098a6;box-shadow:inset 0 0 0 1px #fff,inset 0 0 0 2px #c3c4c8;box-sizing:border-box;"></div>
<div class="b" style="left:461px;top:298px;width:223px;height:380px;background:#fff;border:1px solid #a7abb2;box-sizing:border-box;box-shadow:2px 2px 3px rgba(0,0,0,.18);"></div>
<div class="b" style="left:490px;top:300px;width:1px;height:375px;background:#e2e4e8;"></div>
<div class="b" style="left:464px;top:402px;width:220px;height:24px;background:linear-gradient(#fcefc0,#f9e19a 35%,#f6d576 56%,#f9e19a 80%,#fdf0c4);border:2px solid #f00808;box-sizing:border-box;"></div>
<svg class="ic" style="left:468px;top:303px" width="16" height="16" viewBox="0 0 16 16" ><path d="M3.5 1.5h6l3 3v10h-9z" fill="#fff" stroke="#222" stroke-width="1"/><path d="M9.5 1.5v3h3" fill="none" stroke="#222" stroke-width="1"/></svg>
<span class="t" id="t75" style="left:496px;top:304px;font-size:12px;line-height:15px;letter-spacing:0.261px;color:#1b1b1b;">Nuevo</span>
<svg class="ic" style="left:467px;top:327px" width="18" height="15" viewBox="0 0 18 15" ><defs><linearGradient id="fg467327" x1="0" y1="0" x2="0" y2="1"><stop offset="0" stop-color="#fff3a8"/><stop offset="1" stop-color="#f2bd28"/></linearGradient></defs><path d="M1.500 13.500v-11.500h4.500l1.500 1.800h5.500v2.200" fill="#f3c53a" stroke="#a97b0e" stroke-width="1" stroke-linejoin="round"/><path d="M1.500 13.500l3-7.500h12.500l-3.200 7.500z" fill="url(#fg467327)" stroke="#a97b0e" stroke-width="1" stroke-linejoin="round"/></svg>
<span class="t" id="t76" style="left:496px;top:328px;font-size:12px;line-height:15px;letter-spacing:0.164px;color:#1b1b1b;">Abrir...</span>
<svg class="ic" style="left:468px;top:351px" width="16" height="16" viewBox="0 0 16 16" ><path d="M2.600 3.800L4.600 1.800 8 5.200 11.400 1.800 13.400 3.800 10.100 7.300 13.600 10.900 11.400 13 8 9.500 4.600 13 2.400 10.900 5.900 7.300z" fill="#d6222a" stroke="#b01a20" stroke-width=".6" stroke-linejoin="round"/><path d="M3.600 3.800L12.400 12M12.400 3.800L3.600 12" stroke="#e8585c" stroke-width=".8" stroke-dasharray="1 1"/></svg>
<span class="t" id="t77" style="left:496px;top:352px;font-size:12px;line-height:15px;letter-spacing:0.082px;color:#1b1b1b;">Eliminar</span>
<div class="b" style="left:496px;top:372px;width:182px;height:1px;background:repeating-linear-gradient(90deg,#b9bdc4 0,#b9bdc4 2px,transparent 2px,transparent 4px);"></div>
<svg class="ic" style="left:468px;top:378px" width="16" height="16" viewBox="0 0 16 16" ><defs><radialGradient id="rg468378" cx=".4" cy=".3" r=".8"><stop offset="0" stop-color="#6fdc6a"/><stop offset=".6" stop-color="#2fae36"/><stop offset="1" stop-color="#148322"/></radialGradient></defs><circle cx="8" cy="8" r="7.300" fill="url(#rg468378)" stroke="#0f6d1c" stroke-width="1.100"/><path d="M11.500 10.500a4.200 4.200 0 0 1-7.300-1" fill="none" stroke="#fff" stroke-width="2"/><path d="M1.800 9.800l2.700-3.600 2.400 3.700z" fill="#fff"/><path d="M4.500 5.500a4.200 4.200 0 0 1 7.300 1" fill="none" stroke="#f7ef7a" stroke-width="2"/><path d="M14.200 6.200l-2.700 3.600-2.400-3.700z" fill="#f7ef7a"/></svg>
<span class="t" id="t78" style="left:496px;top:379px;font-size:12px;line-height:15px;letter-spacing:0.030px;color:#1b1b1b;">Actualizar</span>
<div class="b" style="left:496px;top:399px;width:182px;height:1px;background:repeating-linear-gradient(90deg,#b9bdc4 0,#b9bdc4 2px,transparent 2px,transparent 4px);"></div>
<svg class="ic" style="left:468px;top:405px" width="16" height="16" viewBox="0 0 16 16" ><rect x="2.500" y="1.500" width="12.500" height="13" fill="#fdfdfe" stroke="#9aa0a9"/><path d="M2.500 3h-1M2.500 5h-1M2.500 7h-1M2.500 9h-1M2.500 11h-1M2.500 13h-1" stroke="#8a9098" stroke-width="1"/><rect x="4.500" y="3.500" width="8.500" height="3" fill="#6db35a" stroke="#4a9438" stroke-width="1"/><path d="M5 5h7.500" stroke="#9bd08a" stroke-width="1"/><g fill="#8fa3c4"><rect x="4.500" y="8" width="2.300" height="1"/><rect x="7.700" y="8" width="2.300" height="1"/><rect x="10.900" y="8" width="2.300" height="1"/><rect x="4.500" y="10" width="2.300" height="1"/><rect x="7.700" y="10" width="2.300" height="1"/><rect x="10.900" y="10" width="2.300" height="1"/><rect x="4.500" y="12" width="2.300" height="1"/><rect x="7.700" y="12" width="2.300" height="1"/><rect x="10.900" y="12" width="2.300" height="1"/></g></svg>
<span class="t" id="t79" style="left:496px;top:406px;font-size:12px;line-height:15px;letter-spacing:0.164px;color:#1b1b1b;">Informes</span>
<svg class="ic" style="left:667px;top:408px" width="5" height="9" viewBox="0 0 5 9"><path d="M.3 .5L4.700 4.500 .3 8.500z" fill="#111"/></svg>
<svg class="ic" style="left:468px;top:429px" width="16" height="16" viewBox="0 0 16 16" ><g fill="#e1e9f7" stroke="#4f73b8" stroke-width="1"><circle cx="12.99" cy="10.07" r="2.300"/><circle cx="10.07" cy="12.99" r="2.300"/><circle cx="5.93" cy="12.99" r="2.300"/><circle cx="3.01" cy="10.07" r="2.300"/><circle cx="3.01" cy="5.93" r="2.300"/><circle cx="5.93" cy="3.01" r="2.300"/><circle cx="10.07" cy="3.01" r="2.300"/><circle cx="12.99" cy="5.93" r="2.300"/></g><circle cx="8" cy="8" r="5.600" fill="#e1e9f7"/><circle cx="8" cy="8" r="4.200" fill="#c5d3ee" stroke="#6f8fcb" stroke-width=".9"/><rect x="6" y="6" width="4" height="4" rx=".6" fill="#ffffff" stroke="#4f73b8" stroke-width=".9"/></svg>
<span class="t" id="t80" style="left:496px;top:430px;font-size:12px;line-height:15px;letter-spacing:-0.254px;color:#1b1b1b;">Procesos</span>
<svg class="ic" style="left:667px;top:432px" width="5" height="9" viewBox="0 0 5 9"><path d="M.3 .5L4.700 4.500 .3 8.500z" fill="#111"/></svg>
<div class="b" style="left:496px;top:450px;width:182px;height:1px;background:repeating-linear-gradient(90deg,#b9bdc4 0,#b9bdc4 2px,transparent 2px,transparent 4px);"></div>
<svg class="ic" style="left:468px;top:456px" width="16" height="16" viewBox="0 0 32 32" ><defs><radialGradient id="wg468456" cx=".4" cy=".3" r=".8"><stop offset="0" stop-color="#b9dcf5"/><stop offset=".5" stop-color="#3f7fca"/><stop offset="1" stop-color="#143c86"/></radialGradient></defs><circle cx="15" cy="15" r="13.600" fill="url(#wg468456)" stroke="#16357a" stroke-width="1.600"/><path d="M5 9c2.500-4 8-6.500 14-5.500 2 .5 3.500 1.500 4 2.500-3-.5-4 1.500-7 2.500s-4.500-.5-7 .5-3 2-4 0z" fill="#3f9a44" opacity=".95"/><path d="M3 15c1.500-1.500 3-1 4 .5s0 4-1 5.500c-1.500-1.500-2.800-3.500-3-6z" fill="#4aa34c" opacity=".9"/><path d="M10 4.500c3-1.500 6-1.500 8-.8" fill="none" stroke="#e8f4ff" stroke-width="1" opacity=".6"/><rect x="7.500" y="14.500" width="23" height="15.500" rx="1.500" fill="#f4f7fb" stroke="#4a6ea8" stroke-width="1.300"/><circle cx="14.300" cy="19.800" r="3.100" fill="#3a3a3a"/><path d="M9.800 28c0-4 2-5.200 4.500-5.200s4.500 1.200 4.500 5.200z" fill="#e2582a"/><path d="M21.500 18.500h6.500M21.500 22h6.500M21.500 25.500h6.500" stroke="#7fa4dc" stroke-width="2"/></svg>
<span class="t" id="t81" style="left:496px;top:457px;font-size:12px;line-height:15px;letter-spacing:-0.070px;color:#1b1b1b;">Acceso web</span>
<svg class="ic" style="left:469px;top:481px" width="16" height="16" viewBox="0 0 32 32" ><rect x="3.500" y="1.500" width="22" height="25" fill="#fcfcfc" stroke="#8a9098" stroke-width="1.2"/><rect x="7" y="5" width="15" height="4.500" fill="#86c36f" stroke="#4f9440" stroke-width=".8"/><g stroke="#a3abb5" stroke-width="1.600"><path d="M7 13h4M13 13h4M19 13h3M7 16.500h4M13 16.500h4M19 16.500h3M7 20h4M13 20h4M7 23.500h4M13 23.500h4"/></g><g fill="#f2b632" stroke="#a8741a" stroke-width=".9"><ellipse cx="19" cy="27.500" rx="5" ry="2.200"/><ellipse cx="19" cy="25" rx="5" ry="2.200"/><ellipse cx="19" cy="22.500" rx="5" ry="2.200"/><ellipse cx="25.500" cy="26" rx="4.500" ry="2"/><ellipse cx="25.500" cy="23.500" rx="4.500" ry="2"/><ellipse cx="25.500" cy="21" rx="4.500" ry="2"/><ellipse cx="25.500" cy="18.500" rx="4.500" ry="2"/><ellipse cx="25.500" cy="16" rx="4.500" ry="2"/></g></svg>
<span class="t" id="t82" style="left:496px;top:481px;font-size:12px;line-height:15px;letter-spacing:-0.199px;color:#1b1b1b;">Presupuestos</span>
<svg class="ic" style="left:468px;top:504px" width="16" height="16" viewBox="0 0 32 32" ><defs><linearGradient id="gg468504" x1="0" y1="0" x2="1" y2="1"><stop offset="0" stop-color="#8a8d93"/><stop offset="1" stop-color="#2f3236"/></linearGradient><radialGradient id="gf468504" cx=".5" cy=".4" r=".7"><stop offset="0" stop-color="#ffffff"/><stop offset="1" stop-color="#c6e0f5"/></radialGradient></defs><circle cx="16" cy="16" r="14.800" fill="url(#gg468504)" stroke="#3a3d42" stroke-width=".8"/><circle cx="16" cy="16" r="12.900" fill="none" stroke="#b4b8be" stroke-width="1.100"/><circle cx="16" cy="16" r="11.800" fill="url(#gf468504)" stroke="#55595f" stroke-width=".8"/><path d="M9.42 22.58A9.300 9.300 0 0 1 17.61 6.84" fill="none" stroke="#3cc14a" stroke-width="2.400"/><path d="M20.22 7.71A9.300 9.300 0 0 1 22.58 22.58" fill="none" stroke="#d62a24" stroke-width="2.400"/><path d="M18.300 17.200L9.300 10.800l.8-1.100 9.400 5.600z" fill="#3b3e44"/><circle cx="18" cy="16.300" r="1.900" fill="#7a7e85" stroke="#3b3e44" stroke-width=".7"/></svg>
<span class="t" id="t83" style="left:496px;top:505px;font-size:12px;line-height:15px;letter-spacing:-0.004px;color:#1b1b1b;">Contadores</span>
<div class="b" style="left:496px;top:525px;width:182px;height:1px;background:repeating-linear-gradient(90deg,#b9bdc4 0,#b9bdc4 2px,transparent 2px,transparent 4px);"></div>
<svg class="ic" style="left:468px;top:531px" width="16" height="16" viewBox="0 0 16 16" ><path d="M1 5.500l4.500-3.500 4.500 3.500v6h-9z" fill="#e3eefa" stroke="#5b8bd0" stroke-width=".9" stroke-linejoin="round"/><rect x="3" y="3.500" width="5" height="3.500" fill="#f4f9f0" stroke="#7fae6a" stroke-width=".6"/><path d="M1 5.500l4.500 3.500 4.500-3.500" fill="none" stroke="#5b8bd0" stroke-width=".8"/><rect x="6.500" y="6.500" width="9" height="9" rx=".8" fill="#c3d5ef" stroke="#4f7fc3" stroke-width=".8"/><rect x="7.700" y="8" width="6.600" height="6.500" fill="#fbfcfe"/><rect x="9.300" y="5.300" width="3.400" height="2.200" rx=".6" fill="#e9cf8a" stroke="#9a8240" stroke-width=".5"/><path d="M8.300 11.300l1.800 2.200 4.200-5.300" fill="none" stroke="#e0371f" stroke-width="1.500"/></svg>
<span class="t" id="t84" style="left:496px;top:532px;font-size:12px;line-height:15px;letter-spacing:-0.015px;color:#1b1b1b;">Incidencias y notificaciones</span>
<svg class="ic" style="left:468px;top:555px" width="16" height="16" viewBox="0 0 16 16" ><rect x="2.500" y="1.500" width="12" height="12.500" fill="#fdfdfd" stroke="#9aa0a9"/><path d="M2.500 3h-1M2.500 5h-1M2.500 7h-1M2.500 9h-1M2.500 11h-1M2.500 13h-1" stroke="#8a9098" stroke-width="1"/><rect x="4.500" y="3.500" width="8.500" height="2.500" fill="#6db35a" stroke="#4a9438" stroke-width=".8"/><path d="M4.500 8h3M4.500 10h2.500M4.500 12h2" stroke="#8fa3c4" stroke-width="1"/><path d="M4.800 13.800c1.800-.8 2-2.500 2.300-4.300.3-1.700 1.300-2.700 2.900-2.700s2.600 1 2.900 2.700c.3 1.800.5 3.500 2.300 4.300z" fill="#f8c21c" stroke="#1a1405" stroke-width="1" stroke-linejoin="round"/><path d="M9.300 6.800v-1h1.400v1" fill="#1a1405" stroke="#1a1405" stroke-width=".5"/><circle cx="10" cy="14.800" r="1" fill="#1a1405"/><path d="M8 10c.2-1.200.8-1.800 1.500-2" fill="none" stroke="#fff2b0" stroke-width=".8"/></svg>
<span class="t" id="t85" style="left:496px;top:556px;font-size:12px;line-height:15px;letter-spacing:-0.122px;color:#1b1b1b;">Revisiones y certificados</span>
<div class="b" style="left:496px;top:576px;width:182px;height:1px;background:repeating-linear-gradient(90deg,#b9bdc4 0,#b9bdc4 2px,transparent 2px,transparent 4px);"></div>
<svg class="ic" style="left:468px;top:582px" width="16" height="16" viewBox="0 0 16 16" ><path d="M1 15.300h13" stroke="#9da3ab" stroke-width="1.200" opacity=".7"/><path d="M3 1.200l.9 1 .9-1 .9 1 .9-1 .9 1 .9-1 .9 1 .9-1 .9 1 .9-1v13.600l-.9-1-.9 1-.9-1-.9 1-.9-1-.9 1-.9-1-.9 1-.9-1-.9 1z" fill="#e9f1ec" stroke="#4f565e" stroke-width=".9" stroke-linejoin="round"/><path d="M4.800 4.500h6.400M4.800 6.500h6.400M4.800 8.500h6.400M4.800 10.500h6.400M4.800 12.300h4" stroke="#4f8a76" stroke-width="1.100" stroke-dasharray="2 .5"/></svg>
<span class="t" id="t86" style="left:496px;top:583px;font-size:12px;line-height:15px;letter-spacing:-0.194px;color:#1b1b1b;">Recibos</span>
<svg class="ic" style="left:468px;top:606px" width="16" height="16" viewBox="0 0 16 16" ><path d="M2 1.500h7.500l3 3v10h-10.500z" fill="#f1f3f5" stroke="#7d848c" stroke-width=".9" stroke-linejoin="round"/><path d="M9.500 1.500v3h3" fill="#fff" stroke="#7d848c" stroke-width=".8"/><path d="M3.800 5h4M3.800 7h7M3.800 9h7" stroke="#8c949e" stroke-width="1" stroke-dasharray="1.500 .5"/><rect x="3.800" y="10.500" width="4.500" height="2.500" fill="#dfe3e8" stroke="#9aa0a8" stroke-width=".5"/><g fill="#f7cf5a" stroke="#a8741a" stroke-width=".8"><ellipse cx="11.800" cy="14.200" rx="3.300" ry="1.300"/><ellipse cx="11.800" cy="12.400" rx="3.300" ry="1.300"/><ellipse cx="11.800" cy="10.600" rx="3.300" ry="1.300"/></g></svg>
<span class="t" id="t87" style="left:496px;top:607px;font-size:12px;line-height:15px;letter-spacing:-0.086px;color:#1b1b1b;">Facturas</span>
<svg class="ic" style="left:667px;top:609px" width="5" height="9" viewBox="0 0 5 9"><path d="M.3 .5L4.700 4.500 .3 8.500z" fill="#111"/></svg>
<svg class="ic" style="left:468px;top:630px" width="16" height="16" viewBox="0 0 16 16" ><rect x="2.500" y=".500" width="12" height="15" rx="1" fill="#d9e8fa" stroke="#3f7fd6" stroke-width="1"/><rect x="4" y="2" width="9" height="4.500" fill="#fdfdfd" stroke="#8fb5e8" stroke-width=".6"/><path d="M4 2.200h9" stroke="#f0a04a" stroke-width=".8"/><g fill="#4a8be0"><rect x="4" y="8" width="2" height="1.800"/><rect x="6.800" y="8" width="2" height="1.800"/><rect x="9.600" y="8" width="2" height="1.800"/><rect x="4" y="10.600" width="2" height="1.800"/><rect x="6.800" y="10.600" width="2" height="1.800"/><rect x="9.600" y="10.600" width="2" height="1.800"/><rect x="4" y="13" width="2" height="1.500"/><rect x="6.800" y="13" width="2" height="1.500"/><rect x="9.600" y="13" width="2" height="1.500"/></g><rect x="12.200" y="10.600" width="1.300" height="3.900" fill="#f0923a"/><rect x="12.200" y="8" width="1.300" height="1.800" fill="#4a8be0"/></svg>
<span class="t" id="t88" style="left:496px;top:631px;font-size:12px;line-height:15px;letter-spacing:0.063px;color:#1b1b1b;">Cobros/Pagos comunitarios</span>
<svg class="ic" style="left:468px;top:654px" width="16" height="16" viewBox="0 0 16 16" ><rect x="2.500" y=".500" width="12" height="15" rx="1" fill="#d9e8fa" stroke="#3f7fd6" stroke-width="1"/><rect x="4" y="2" width="9" height="4.500" fill="#fdfdfd" stroke="#8fb5e8" stroke-width=".6"/><path d="M4 2.200h9" stroke="#f0a04a" stroke-width=".8"/><g fill="#4a8be0"><rect x="4" y="8" width="2" height="1.800"/><rect x="6.800" y="8" width="2" height="1.800"/><rect x="9.600" y="8" width="2" height="1.800"/><rect x="4" y="10.600" width="2" height="1.800"/><rect x="6.800" y="10.600" width="2" height="1.800"/><rect x="9.600" y="10.600" width="2" height="1.800"/><rect x="4" y="13" width="2" height="1.500"/><rect x="6.800" y="13" width="2" height="1.500"/><rect x="9.600" y="13" width="2" height="1.500"/></g><rect x="12.200" y="10.600" width="1.300" height="3.900" fill="#f0923a"/><rect x="12.200" y="8" width="1.300" height="1.800" fill="#4a8be0"/><path d="M6.500 16c0-3.500 1.800-4.800 5-4.800s5 1.300 5 4.800z" fill="#1f2f6a"/><path d="M10.900 11.300h1.200l.4 3.200-1 1.200-1-1.200z" fill="#d23a2a"/><path d="M10 11.200l1.500 1.300 1.500-1.300-.5-.8h-2z" fill="#fff"/><circle cx="11.500" cy="8.300" r="2.600" fill="#d99a6c"/><path d="M8.800 8c-.2-2.500 1.500-3.300 2.900-3.300 1.800 0 2.900 1.200 2.600 3.300-.6-1.200-1.800-1.800-3-1.600-1 .1-2 .6-2.500 1.600z" fill="#7a3f16"/></svg>
<span class="t" id="t89" style="left:496px;top:655px;font-size:12px;line-height:15px;letter-spacing:0.037px;color:#1b1b1b;">Cobros/Pagos individuales</span>
<div class="b" style="left:684px;top:401px;width:259px;height:268px;background:#fff;border:1px solid #a7abb2;box-sizing:border-box;box-shadow:2px 2px 3px rgba(0,0,0,.18);"></div>
<div class="b" style="left:713px;top:403px;width:1px;height:264px;background:#e2e4e8;"></div>
<div class="b" style="left:684px;top:644px;width:259px;height:24px;background:linear-gradient(#fcefc0,#f9e19a 35%,#f6d576 56%,#f9e19a 80%,#fdf0c4);border:2px solid #f00808;box-sizing:border-box;"></div>
<svg class="ic" style="left:691px;top:407px" width="16" height="16" viewBox="0 0 16 16" ><rect x="2.500" y=".500" width="9" height="13.500" fill="#a9b7cd" stroke="#8d9bb3" stroke-width=".6"/><path d="M4.500 .5v13.500M6.500 .5v13.500M8.500 .5v13.500M2.500 2.500h9M2.500 4.500h9M2.500 6.500h9M2.500 8.500h9M2.500 10.500h9M2.500 12.500h9" stroke="#e9eef6" stroke-width=".8"/><path d="M.3 15.200c.3-1.800 1.300-3 2.300-3 .8 0 1.200.6 1.600 1.100.4-.6.900-.9 1.500-.9 1 0 1.700 1.200 2 2.800z" fill="#5fb548" stroke="#3f8f30" stroke-width=".5"/><rect x="7.500" y="6.500" width="7.500" height="8.500" fill="#f6f8fa" stroke="#8a9098" stroke-width=".8"/><rect x="8.700" y="7.800" width="5.100" height="2" fill="#79c063" stroke="#4a9438" stroke-width=".5"/><path d="M8.700 11.500h5.100M8.700 13.200h5.100" stroke="#9aa6b8" stroke-width=".9" stroke-dasharray="1.300 .6"/></svg>
<span class="t" id="t90" style="left:719px;top:408px;font-size:12px;line-height:15px;letter-spacing:-0.183px;color:#1b1b1b;">Datos básicos</span>
<svg class="ic" style="left:691px;top:431px" width="16" height="16" viewBox="0 0 16 16" ><rect x="2.500" y=".500" width="9" height="13.500" fill="#a9b7cd" stroke="#8d9bb3" stroke-width=".6"/><path d="M4.500 .5v13.500M6.500 .5v13.500M8.500 .5v13.500M2.500 2.500h9M2.500 4.500h9M2.500 6.500h9M2.500 8.500h9M2.500 10.500h9M2.500 12.500h9" stroke="#e9eef6" stroke-width=".8"/><path d="M.3 15.200c.3-1.800 1.300-3 2.300-3 .8 0 1.200.6 1.600 1.100.4-.6.900-.9 1.500-.9 1 0 1.700 1.200 2 2.800z" fill="#5fb548" stroke="#3f8f30" stroke-width=".5"/><rect x="7" y="7.500" width="8" height="8" rx=".6" fill="#c3d5ef" stroke="#4f7fc3" stroke-width=".8"/><rect x="8.200" y="8.800" width="5.600" height="5.700" fill="#fbfcfe"/><rect x="9.500" y="6.300" width="3" height="2" rx=".5" fill="#e9cf8a" stroke="#9a8240" stroke-width=".5"/><path d="M8.700 11.800l1.700 2 3.800-4.800" fill="none" stroke="#e0371f" stroke-width="1.400"/></svg>
<span class="t" id="t91" style="left:719px;top:432px;font-size:12px;line-height:15px;letter-spacing:-0.004px;color:#1b1b1b;">Incidencias</span>
<svg class="ic" style="left:691px;top:455px" width="16" height="16" viewBox="0 0 16 16" ><path d="M.8 15.200c0-4 2.200-5.500 6-5.500s6 1.500 6 5.500z" fill="#22357a" stroke="#141f4a" stroke-width=".5"/><path d="M5.300 9.800l1.500 1.600 1.500-1.600-.4-1h-2.200z" fill="#fff"/><path d="M6.200 10.600h1.200l.5 3.200-1.100 1.200-1.100-1.200z" fill="#d23a2a"/><circle cx="6.800" cy="5.800" r="3.300" fill="#e0a878" stroke="#9a6238" stroke-width=".5"/><path d="M3.300 5.800c-.5-3.300 1.500-4.800 3.700-4.800 2.400 0 3.800 1.700 3.300 4.800-.6-1.600-1.800-2.400-3.400-2.300-1.600.1-2.800.8-3.600 2.300z" fill="#7a3f16"/><circle cx="12.800" cy="9" r="1.700" fill="none" stroke="#e2a820" stroke-width="1.300"/><rect x="10.800" y="10.300" width="4.200" height="4.700" rx=".8" fill="#f5c63a" stroke="#a87a12" stroke-width=".6"/></svg>
<span class="t" id="t92" style="left:719px;top:456px;font-size:12px;line-height:15px;letter-spacing:-0.031px;color:#1b1b1b;">Datos de contacto de los propietarios</span>
<svg class="ic" style="left:691px;top:479px" width="16" height="16" viewBox="0 0 16 16" ><defs><radialGradient id="pr691479" cx=".35" cy=".3" r=".9"><stop offset="0" stop-color="#ee5a50"/><stop offset="1" stop-color="#c5221f"/></radialGradient><radialGradient id="pg691479" cx=".3" cy=".6" r=".9"><stop offset="0" stop-color="#c8ecc0"/><stop offset="1" stop-color="#5cba58"/></radialGradient><radialGradient id="pb691479" cx=".3" cy=".2" r=".9"><stop offset="0" stop-color="#a6d4f2"/><stop offset="1" stop-color="#3d8fd4"/></radialGradient></defs><circle cx="8" cy="8" r="7.300" fill="url(#pr691479)"/><path d="M8 8V.7a7.300 7.300 0 0 1 7.100 9z" fill="url(#pg691479)"/><path d="M8 8l7.100 1.700a7.300 7.300 0 0 1-6.100 5.500z" fill="url(#pb691479)"/></svg>
<span class="t" id="t93" style="left:719px;top:480px;font-size:12px;line-height:15px;letter-spacing:-0.047px;color:#1b1b1b;">Coeficientes de reparto</span>
<svg class="ic" style="left:691px;top:503px" width="16" height="16" viewBox="0 0 16 16" ><rect x="1" y="4.500" width="12.500" height="10.500" rx="1" fill="#eef0f2" stroke="#80868e" stroke-width=".9"/><path d="M11 9l4.500-2.500-4.500-2.500v1.500h-2v2h2z" fill="#8fcf4a" stroke="#4f8f2a" stroke-width=".5" transform="translate(0 2.500)"/><path d="M9 5.500l2.500-5 2.500 5h-1.500v2.500h-2v-2.500z" fill="#f5a623" stroke="#b86a12" stroke-width=".5"/><text x="1.800" y="12.800" font-family="Liberation Sans,sans-serif" font-size="7" font-weight="bold" fill="#222" letter-spacing="-.4">43</text></svg>
<span class="t" id="t94" style="left:719px;top:504px;font-size:12px;line-height:15px;letter-spacing:-0.125px;color:#1b1b1b;">Extractos bancarios</span>
<svg class="ic" style="left:691px;top:527px" width="16" height="16" viewBox="0 0 16 16" ><rect x="2.500" y="1.500" width="12.500" height="13" fill="#fdfdfe" stroke="#9aa0a9"/><path d="M2.500 3h-1M2.500 5h-1M2.500 7h-1M2.500 9h-1M2.500 11h-1M2.500 13h-1" stroke="#8a9098" stroke-width="1"/><rect x="4.500" y="3.500" width="8.500" height="3" fill="#6db35a" stroke="#4a9438" stroke-width="1"/><path d="M5 5h7.500" stroke="#9bd08a" stroke-width="1"/><g fill="#8fa3c4"><rect x="4.500" y="8" width="2.300" height="1"/><rect x="7.700" y="8" width="2.300" height="1"/><rect x="10.900" y="8" width="2.300" height="1"/><rect x="4.500" y="10" width="2.300" height="1"/><rect x="7.700" y="10" width="2.300" height="1"/><rect x="10.900" y="10" width="2.300" height="1"/><rect x="4.500" y="12" width="2.300" height="1"/><rect x="7.700" y="12" width="2.300" height="1"/><rect x="10.900" y="12" width="2.300" height="1"/></g></svg>
<span class="t" id="t95" style="left:719px;top:528px;font-size:12px;line-height:15px;letter-spacing:-0.128px;color:#1b1b1b;">Estado de cuentas detallado</span>
<svg class="ic" style="left:691px;top:551px" width="16" height="16" viewBox="0 0 16 16" ><rect x="2.500" y="1.500" width="12.500" height="13" fill="#fdfdfe" stroke="#9aa0a9"/><path d="M2.500 3h-1M2.500 5h-1M2.500 7h-1M2.500 9h-1M2.500 11h-1M2.500 13h-1" stroke="#8a9098" stroke-width="1"/><rect x="4.500" y="3.500" width="8.500" height="3" fill="#6db35a" stroke="#4a9438" stroke-width="1"/><path d="M5 5h7.500" stroke="#9bd08a" stroke-width="1"/><g fill="#8fa3c4"><rect x="4.500" y="8" width="2.300" height="1"/><rect x="7.700" y="8" width="2.300" height="1"/><rect x="10.900" y="8" width="2.300" height="1"/><rect x="4.500" y="10" width="2.300" height="1"/><rect x="7.700" y="10" width="2.300" height="1"/><rect x="10.900" y="10" width="2.300" height="1"/><rect x="4.500" y="12" width="2.300" height="1"/><rect x="7.700" y="12" width="2.300" height="1"/><rect x="10.900" y="12" width="2.300" height="1"/></g></svg>
<span class="t" id="t96" style="left:719px;top:552px;font-size:12px;line-height:15px;letter-spacing:-0.270px;color:#1b1b1b;">Estado de cuentas express</span>
<svg class="ic" style="left:691px;top:575px" width="16" height="16" viewBox="0 0 16 16" ><path d="M1 15.300h13" stroke="#9da3ab" stroke-width="1.200" opacity=".7"/><path d="M3 1.200l.9 1 .9-1 .9 1 .9-1 .9 1 .9-1 .9 1 .9-1 .9 1 .9-1v13.600l-.9-1-.9 1-.9-1-.9 1-.9-1-.9 1-.9-1-.9 1-.9-1-.9 1z" fill="#e9f1ec" stroke="#4f565e" stroke-width=".9" stroke-linejoin="round"/><path d="M4.800 4.500h6.400M4.800 6.500h6.400M4.800 8.500h6.400M4.800 10.500h6.400M4.800 12.300h4" stroke="#4f8a76" stroke-width="1.100" stroke-dasharray="2 .5"/></svg>
<span class="t" id="t97" style="left:719px;top:576px;font-size:12px;line-height:15px;letter-spacing:-0.194px;color:#1b1b1b;">Recibos</span>
<svg class="ic" style="left:691px;top:599px" width="16" height="16" viewBox="0 0 32 32" ><rect x="3.500" y="1.500" width="22" height="25" fill="#fcfcfc" stroke="#8a9098" stroke-width="1.2"/><rect x="7" y="5" width="15" height="4.500" fill="#86c36f" stroke="#4f9440" stroke-width=".8"/><g stroke="#a3abb5" stroke-width="1.600"><path d="M7 13h4M13 13h4M19 13h3M7 16.500h4M13 16.500h4M19 16.500h3M7 20h4M13 20h4M7 23.500h4M13 23.500h4"/></g><g fill="#f2b632" stroke="#a8741a" stroke-width=".9"><ellipse cx="19" cy="27.500" rx="5" ry="2.200"/><ellipse cx="19" cy="25" rx="5" ry="2.200"/><ellipse cx="19" cy="22.500" rx="5" ry="2.200"/><ellipse cx="25.500" cy="26" rx="4.500" ry="2"/><ellipse cx="25.500" cy="23.500" rx="4.500" ry="2"/><ellipse cx="25.500" cy="21" rx="4.500" ry="2"/><ellipse cx="25.500" cy="18.500" rx="4.500" ry="2"/><ellipse cx="25.500" cy="16" rx="4.500" ry="2"/></g></svg>
<span class="t" id="t98" style="left:719px;top:600px;font-size:12px;line-height:15px;letter-spacing:-0.265px;color:#1b1b1b;">Presupuesto vs gastos reales</span>
<svg class="ic" style="left:691px;top:623px" width="16" height="16" viewBox="0 0 16 16" ><rect x="2.500" y="1.500" width="12.500" height="13" fill="#fdfdfe" stroke="#9aa0a9"/><path d="M2.500 3h-1M2.500 5h-1M2.500 7h-1M2.500 9h-1M2.500 11h-1M2.500 13h-1" stroke="#8a9098" stroke-width="1"/><rect x="4.500" y="3.500" width="8.500" height="3" fill="#6db35a" stroke="#4a9438" stroke-width="1"/><path d="M5 5h7.500" stroke="#9bd08a" stroke-width="1"/><g fill="#8fa3c4"><rect x="4.500" y="8" width="2.300" height="1"/><rect x="7.700" y="8" width="2.300" height="1"/><rect x="10.900" y="8" width="2.300" height="1"/><rect x="4.500" y="10" width="2.300" height="1"/><rect x="7.700" y="10" width="2.300" height="1"/><rect x="10.900" y="10" width="2.300" height="1"/><rect x="4.500" y="12" width="2.300" height="1"/><rect x="7.700" y="12" width="2.300" height="1"/><rect x="10.900" y="12" width="2.300" height="1"/></g></svg>
<span class="t" id="t99" style="left:719px;top:624px;font-size:12px;line-height:15px;letter-spacing:-0.179px;color:#1b1b1b;">Deglose de ingresos</span>
<svg class="ic" style="left:691px;top:647px" width="16" height="16" viewBox="0 0 16 16" ><rect x="2.500" y="1.500" width="12.500" height="13" fill="#fdfdfe" stroke="#9aa0a9"/><path d="M2.500 3h-1M2.500 5h-1M2.500 7h-1M2.500 9h-1M2.500 11h-1M2.500 13h-1" stroke="#8a9098" stroke-width="1"/><rect x="4.500" y="3.500" width="8.500" height="3" fill="#6db35a" stroke="#4a9438" stroke-width="1"/><path d="M5 5h7.500" stroke="#9bd08a" stroke-width="1"/><g fill="#8fa3c4"><rect x="4.500" y="8" width="2.300" height="1"/><rect x="7.700" y="8" width="2.300" height="1"/><rect x="10.900" y="8" width="2.300" height="1"/><rect x="4.500" y="10" width="2.300" height="1"/><rect x="7.700" y="10" width="2.300" height="1"/><rect x="10.900" y="10" width="2.300" height="1"/><rect x="4.500" y="12" width="2.300" height="1"/><rect x="7.700" y="12" width="2.300" height="1"/><rect x="10.900" y="12" width="2.300" height="1"/></g></svg>
<span class="t" id="t100" style="left:719px;top:648px;font-size:12px;line-height:15px;letter-spacing:0.035px;color:#1b1b1b;">Extracto contable por departamento</span>
</body></html>
